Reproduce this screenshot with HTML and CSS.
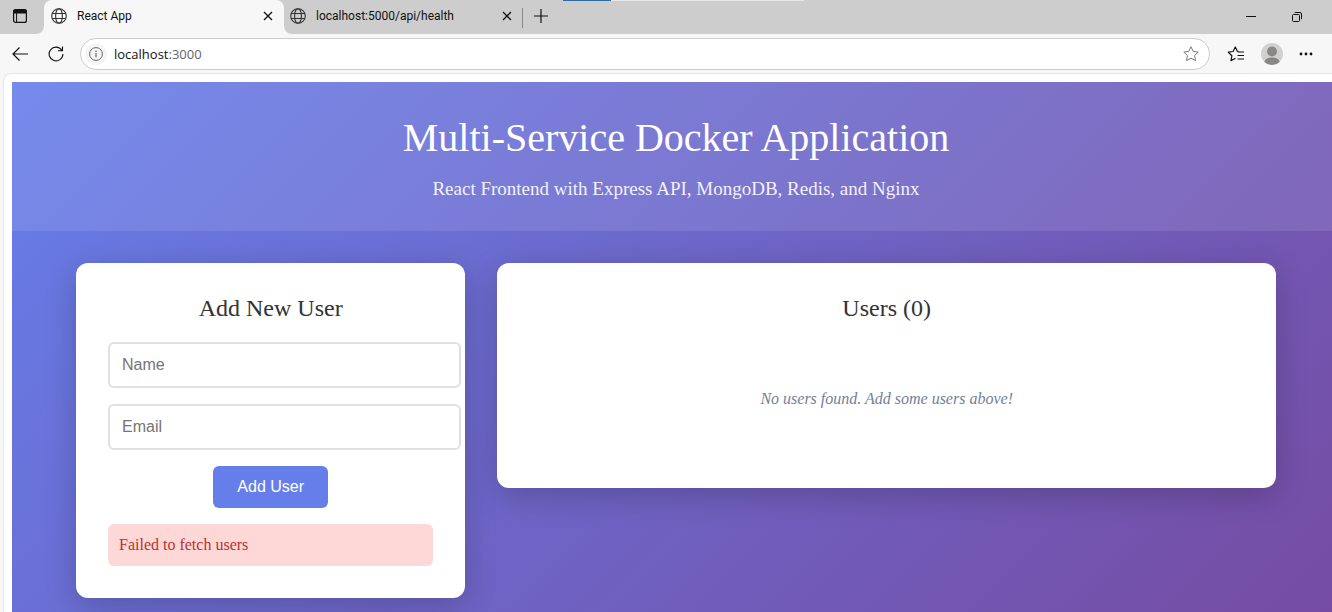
FILE: index.html
```html
<!DOCTYPE html>
<html lang="en">
<head>
<meta charset="utf-8">
<title>React App</title>
<link rel="stylesheet" href="styles.css">
</head>
<body>
<svg class="defs" aria-hidden="true">
  <symbol id="globe" viewBox="0 0 16 16"><g fill="none" stroke="currentColor" stroke-width="1.1"><circle cx="8" cy="8" r="7.3"/><ellipse cx="8" cy="8" rx="3.4" ry="7.3"/><path d="M1.3 5.5h13.4M1.3 10.5h13.4"/></g></symbol>
  <symbol id="close" viewBox="0 0 10 10"><path d="M1 1l8 8M9 1l-8 8" stroke="currentColor" stroke-width="1.3"/></symbol>
</svg>
<header class="browser">
  <div class="tab-bar">
    <div class="bar-start">
      <button class="icon-button" aria-label="Tab actions"><svg width="14" height="14" viewBox="0 0 14 14"><rect x=".6" y=".6" width="12.8" height="12.8" rx="2" fill="none" stroke="currentColor" stroke-width="1.2"/><path d="M0 4.5V2.5a2 2 0 0 1 2-2h10a2 2 0 0 1 2 2v2z" fill="currentColor"/><path d="M3.6 4v9" stroke="currentColor"/></svg></button>
    </div>
    <div class="tab-slot">
      <div class="tab tab-active">
        <svg class="favicon"><use href="#globe"/></svg>
        <span class="tab-title">React App</span>
        <button class="icon-button" aria-label="Close tab"><svg width="10" height="10"><use href="#close"/></svg></button>
      </div>
    </div>
    <div class="bar-end">
      <div class="tab">
        <svg class="favicon"><use href="#globe"/></svg>
        <span class="tab-title">localhost:5000/api/health</span>
        <button class="icon-button" aria-label="Close tab"><svg width="10" height="10"><use href="#close"/></svg></button>
      </div>
      <span class="divider"></span>
      <button class="icon-button new-tab" aria-label="New tab"><svg width="14" height="14" viewBox="0 0 14 14"><path d="M7 0v14M0 7h14" stroke="currentColor" stroke-width="1.2"/></svg></button>
      <div class="progress"><span></span></div>
      <div class="window-controls">
        <button class="icon-button" aria-label="Minimize"><svg width="10" height="10"><path d="M0 4.5h10" stroke="currentColor"/></svg></button>
        <button class="icon-button" aria-label="Restore"><svg width="10" height="10" viewBox="0 0 10 10" fill="none" stroke="currentColor"><rect x=".5" y="2.5" width="7" height="7" rx="1"/><path d="M2.8.5H8a1.5 1.5 0 0 1 1.5 1.5v5.2"/></svg></button>
      </div>
    </div>
  </div>
  <div class="toolbar">
    <button class="icon-button" aria-label="Back"><svg width="16" height="14" viewBox="0 0 16 14" fill="none" stroke="currentColor" stroke-width="1.2"><path d="M16 7H1M7.5.5L1 7l6.5 6.5"/></svg></button>
    <button class="icon-button" aria-label="Refresh"><svg width="16" height="16" viewBox="0 0 17 17" fill="none" stroke="currentColor" stroke-width="1.2"><path d="M15.8 8.5A7.3 7.3 0 1 1 14.6 4.500M15.400.5v4.600h-4.800"/></svg></button>
    <div class="address">
      <button class="icon-button site-info" aria-label="Site information"><svg width="14" height="14" viewBox="0 0 14 14"><circle cx="7" cy="7" r="6.4" fill="none" stroke="currentColor"/><path d="M7 6v4.200M7 3.600v1.300" stroke="currentColor" stroke-width="1.2"/></svg></button>
      <div class="url" role="textbox" aria-label="Address">localhost<span>:3000</span></div>
      <button class="icon-button favorite" aria-label="Add to favorites"><svg width="16" height="16" viewBox="0 0 16 16"><path d="M8 .8l2.200 4.600 5 .7-3.600 3.500.9 5L8 12.200l-4.500 2.400.9-5L.8 6.100l5-.7z" fill="none" stroke="currentColor" stroke-linejoin="round"/></svg></button>
    </div>
    <div class="actions">
      <button class="icon-button" aria-label="Favorites"><svg width="18" height="16" viewBox="0 0 18 16" fill="none" stroke="currentColor" stroke-width="1.2" stroke-linejoin="round"><path d="M8.500 12.200L4 14.600l.9-4.900L1.300 6.200l4.800-.7L8.300 1l2.200 4.500 1.500.3M11 6h6M10.500 9.500H17M10.500 13H17"/></svg></button>
      <button class="icon-button" aria-label="Profile"><svg width="22" height="22" viewBox="0 0 22 22"><circle cx="11" cy="11" r="11" fill="#d2d0ce"/><circle cx="11" cy="8.500" r="5" fill="#8a8886"/><path d="M3.400 19Q4 14.500 11 14.500T18.600 19Q15.500 22 11 22T3.400 19z" fill="#8a8886"/></svg></button>
      <button class="icon-button" aria-label="Settings and more"><svg width="14" height="4" viewBox="0 0 14 4" fill="currentColor"><circle cx="2" cy="2" r="1.400"/><circle cx="7" cy="2" r="1.400"/><circle cx="12" cy="2" r="1.400"/></svg></button>
    </div>
  </div>
</header>
<div class="viewport">
  <div class="app">
    <header class="app-header">
      <h1>Multi-Service Docker Application</h1>
      <p>React Frontend with Express API, MongoDB, Redis, and Nginx</p>
    </header>
    <main class="container">
      <section class="card">
        <h2>Add New User</h2>
        <form class="user-form">
          <input type="text" placeholder="Name" aria-label="Name">
          <input type="email" placeholder="Email" aria-label="Email">
          <button type="submit">Add User</button>
        </form>
        <div class="error" role="alert">Failed to fetch users</div>
      </section>
      <section class="card">
        <h2>Users (0)</h2>
        <p class="empty">No users found. Add some users above!</p>
      </section>
    </main>
  </div>
</div>
</body>
</html>
```
FILE: styles.css
```css
body {
  margin: 0;
  min-height: 100vh;
  display: flex;
  flex-direction: column;
  overflow: hidden;
  background: #f7f7f7;
  font-family: "Liberation Serif", "Times New Roman", serif;
}
.defs { display: none; }

/* Browser frame */
.browser { font-family: "Open Sans", "Segoe UI", sans-serif; color: #111; }
.icon-button {
  display: flex;
  align-items: center;
  justify-content: center;
  padding: 0;
  border: 0;
  background: none;
  color: inherit;
}
.tab-bar { display: flex; height: 34px; }
.bar-start, .bar-end, .tab-slot { background: #cdcdcd; }
.bar-start {
  width: 44px;
  display: flex;
  box-sizing: border-box;
  padding: 0 4px 2px 0;
  justify-content: center;
  border-bottom-right-radius: 8px;
}
.bar-end {
  flex: 1;
  display: flex;
  align-items: center;
  border-bottom-left-radius: 8px;
}
.tab-slot { background: linear-gradient(#cdcdcd 50%, #f7f7f7 50%); }
.tab {
  box-sizing: border-box;
  width: 240px;
  height: 34px;
  display: flex;
  align-items: center;
  gap: 10px;
  padding: 0 11px 2px 7px;
  font-family: Roboto, "Segoe UI", sans-serif;
  font-size: 12px;
}
.bar-end .tab { width: 238px; padding: 0 10px 2px 6px; }
.tab-active { background: #f7f7f7; border-radius: 8px 8px 0 0; }
.favicon { width: 16px; height: 16px; color: #333; }
.tab-title { flex: 1; white-space: nowrap; }
.divider { width: 1px; height: 20px; margin-top: 1px; background: #888; }
.new-tab { padding: 0 15px 2px 11px; }
.progress {
  align-self: flex-start;
  width: 241px;
  height: 1px;
  background: #e8e8e8;
}
.progress span { display: block; width: 20%; height: 1px; background: #2f6ca5; }
.window-controls {
  margin-left: auto;
  display: flex;
  gap: 36px;
  padding: 0 30px 1px 0;
}
.toolbar {
  display: flex;
  align-items: center;
  gap: 20px;
  height: 39px;
  padding: 0 19px 0 12px;
}
.address {
  flex: 1;
  box-sizing: border-box;
  height: 32px;
  margin-left: -4px;
  display: flex;
  align-items: center;
  gap: 7px;
  padding: 0 10px 0 4px;
  border: 1px solid #ccc;
  border-radius: 16px;
  background: #fff;
}
.site-info { width: 22px; height: 22px; border-radius: 11px; background: #f5f5f5; color: #666; }
.url { flex: 1; font-size: 13px; }
.url span { color: #666; }
.favorite { color: #777; }
.actions { display: flex; align-items: center; gap: 16px; margin-left: -4px; padding-left: 1px; }

/* Page */
.viewport {
  flex: 1;
  display: flex;
  margin-left: 3px;
  padding: 8px 0 0 8px;
  border: 1px solid #e6e6e6;
  border-width: 1px 0 0 1px;
  border-top-left-radius: 8px;
  background: #fff;
}
.app {
  flex: 1;
  margin-right: -8px;
  background: linear-gradient(135deg, #667eea 0%, #764ba2 100%);
}
.app-header {
  padding: 32px;
  text-align: center;
  color: #fff;
  background: rgba(255, 255, 255, 0.1);
}
h1, h2, p { margin: 0; font-weight: 400; }
h1 { margin-bottom: 16px; font-size: 40px; line-height: 48px; }
.app-header p { font-size: 19px; line-height: 21px; opacity: 0.9; }
.container {
  max-width: 1200px;
  margin: 0 auto;
  padding: 32px;
  display: grid;
  grid-template-columns: 1fr 2fr;
  gap: 32px;
  align-items: start;
}
.card {
  padding: 32px;
  border-radius: 12px;
  background: #fff;
  box-shadow: 0 8px 32px rgba(0, 0, 0, 0.2);
}
h2 {
  margin-bottom: 20px;
  font-size: 24px;
  line-height: 27px;
  text-align: center;
  color: #333;
}
.user-form { display: flex; flex-direction: column; gap: 16px; }
.user-form input {
  width: 100%;
  height: 18px;
  padding: 12px;
  border: 2px solid #e0e0e0;
  border-radius: 6px;
  font: 16px "Liberation Sans", Arial, sans-serif;
}
.user-form input::placeholder { color: #757575; }
.user-form button {
  align-self: center;
  padding: 12px 24px;
  border: 0;
  border-radius: 6px;
  background: #667eea;
  color: #fff;
  font: 16px/18px "Liberation Sans", Arial, sans-serif;
}
.error {
  margin-top: 16px;
  padding: 12px 11px;
  border-radius: 6px;
  background: #fed7d7;
  color: #b83232;
  font-size: 16px;
  line-height: 18px;
}
.empty {
  padding: 48px;
  text-align: center;
  font-size: 16px;
  line-height: 18px;
  font-style: italic;
  color: #718096;
}
```
